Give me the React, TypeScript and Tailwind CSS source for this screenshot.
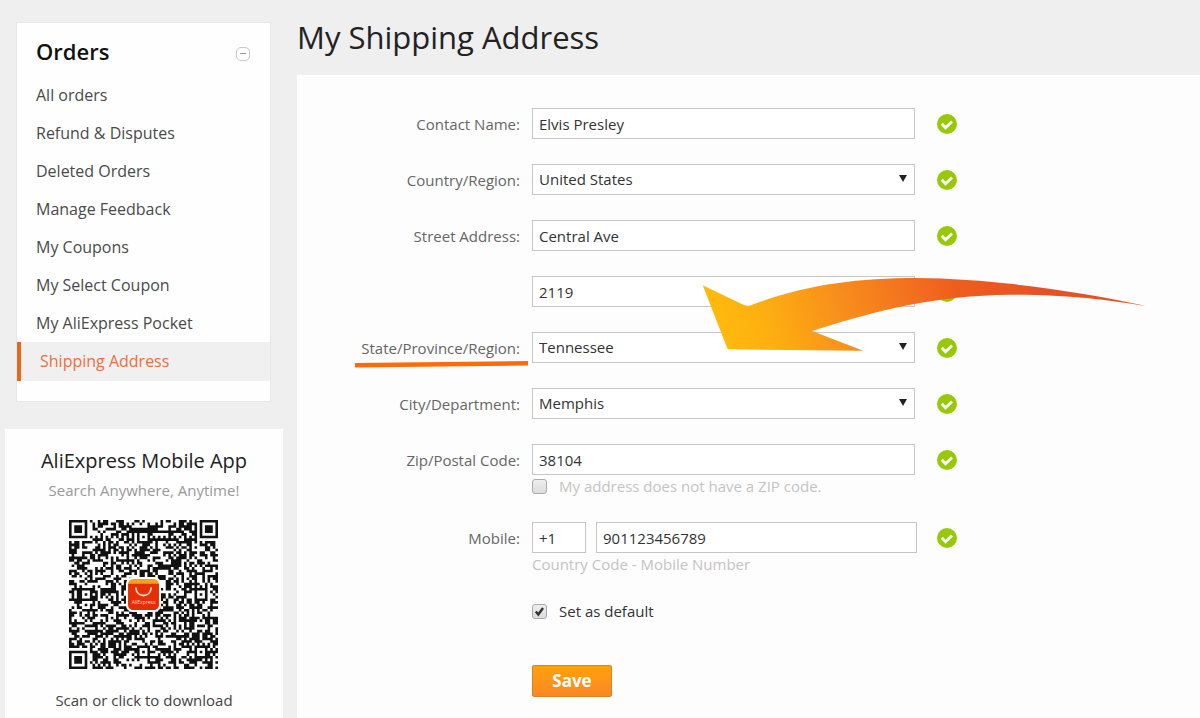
import { useId, useState } from "react";
import type { ReactNode } from "react";

const MENU = [
  "All orders",
  "Refund & Disputes",
  "Deleted Orders",
  "Manage Feedback",
  "My Coupons",
  "My Select Coupon",
  "My AliExpress Pocket",
  "Shipping Address",
];

const QR_SIZE = 57;

// finder pattern in a corner: returns undefined outside of it
const finder = (x: number, y: number, cx: number, cy: number) => {
  const d = Math.max(Math.abs(x - cx), Math.abs(y - cy));
  if (d > 4) return undefined;
  return d !== 2 && d !== 4;
};

const alignment = (x: number, y: number, cx: number, cy: number) => {
  const d = Math.max(Math.abs(x - cx), Math.abs(y - cy));
  if (d > 2) return undefined;
  return d !== 1;
};

const buildQr = () => {
  let seed = 20391;
  let path = "";
  for (let y = 0; y < QR_SIZE; y++) {
    for (let x = 0; x < QR_SIZE; x++) {
      seed = (seed * 1103515245 + 12345) % 2147483648;
      const dark =
        finder(x, y, 3, 3) ??
        finder(x, y, 53, 3) ??
        finder(x, y, 3, 53) ??
        alignment(x, y, 28, 6) ??
        alignment(x, y, 6, 28) ??
        alignment(x, y, 50, 28) ??
        alignment(x, y, 28, 50) ??
        alignment(x, y, 50, 50) ??
        (x === 6 || y === 6 ? (x + y) % 2 === 0 : seed / 2147483648 > 0.47);
      if (dark) path += `M${x} ${y}h1v1h-1z`;
    }
  }
  return path;
};

const QR_PATH = buildQr();

const QrCode = () => (
  <svg viewBox="0 0 57 57" className="size-[149px]" role="img" aria-label="QR code">
    <path d={QR_PATH} fill="#111" />
    <rect x="21.8" y="21.8" width="13.4" height="13.4" rx="2.6" fill="#fff" />
    <rect x="22.6" y="22.6" width="11.8" height="11.8" rx="2" fill="#f7a01b" />
    <path d="M22.6 24.4h11.8v8a2 2 0 0 1-2 2h-7.8a2 2 0 0 1-2-2z" fill="#e62e04" />
    <path d="M25.6 26.1c.4 3.7 5.4 3.7 5.8 0" fill="none" stroke="#ffd9cc" strokeWidth=".7" strokeLinecap="round" />
    <text x="28.5" y="32" textAnchor="middle" fontSize="1.9" fill="#ffd9cc" fontFamily="Open Sans, sans-serif">
      AliExpress
    </text>
  </svg>
);

const ValidIcon = () => (
  <svg viewBox="0 0 20 20" className="size-5 shrink-0" aria-hidden="true">
    <circle cx="10" cy="10" r="10" fill="#98c80a" />
    <path d="M4.8 9.8l3.7 4L15 7.5" fill="none" stroke="#fff" strokeWidth="2.8" />
  </svg>
);

const Arrow = () => (
  <svg
    viewBox="0 0 1410 330"
    className="pointer-events-none absolute -top-4 left-[158px] z-10 h-[110px] w-[470px] max-w-none"
    aria-hidden="true"
  >
    <defs>
      <linearGradient id="arrow" gradientUnits="userSpaceOnUse" x1="110" y1="250" x2="1000" y2="-40">
        <stop offset="0" stopColor="#ffb90d" />
        <stop offset=".15" stopColor="#fdae10" />
        <stop offset=".35" stopColor="#f8931b" />
        <stop offset=".6" stopColor="#f3721e" />
        <stop offset=".75" stopColor="#ef5d1e" />
        <stop offset="1" stopColor="#e55325" />
      </linearGradient>
    </defs>
    <path
      d="M38 76L160 134Q177 141 192 132C350 74 500 54 680 54C900 56 1150 90 1368 138C1250 118 1130 104 960 104C740 106 560 150 366 213L520 272L113 268Z"
      fill="url(#arrow)"
    />
  </svg>
);

const boxClass = "h-[31px] w-full min-w-0 border border-[#c6c6c6] bg-white px-[6px] text-[15px] text-[#333] outline-none";

interface RowProps {
  label?: string;
  htmlFor?: string;
  underline?: boolean;
  below?: ReactNode;
  children: ReactNode;
}

/** One form line: label on the left, control in the middle, valid mark on the right */
const Row = ({ label, htmlFor, underline, below, children }: RowProps) => (
  <div className="flex gap-3">
    <div className="w-[223px] shrink-0 pt-1 text-right text-[#666]">
      {label && (
        <label htmlFor={htmlFor} className="relative inline-block leading-6">
          {label}
          {underline && (
            <svg viewBox="0 0 173 7" className="absolute top-[25px] -right-2 h-[7px] w-[173px] max-w-none" aria-hidden="true">
              <path d="M0 2L173 0V4.500L0 6.500Z" fill="#ff6a0a" />
            </svg>
          )}
        </label>
      )}
    </div>
    <div className="relative min-w-0 max-w-[385px] flex-1">
      {children}
      {below}
    </div>
    <div className="flex h-[31px] items-center pl-2">
      <ValidIcon />
    </div>
  </div>
);

const TextRow = ({ label, value, name, below, arrow }: { label?: string; value: string; name: string; below?: ReactNode; arrow?: boolean }) => {
  const id = useId();
  return (
    <Row label={label} htmlFor={id} below={below}>
      <div className="pr-0.5">
        <input id={id} aria-label={label ? undefined : name} name={name} defaultValue={value} className={boxClass} />
      </div>
      {arrow && <Arrow />}
    </Row>
  );
};

const SelectRow = ({ label, value, underline }: { label: string; value: string; underline?: boolean }) => {
  const id = useId();
  return (
    <Row label={label} htmlFor={id} underline={underline}>
      <div className="relative pr-0.5">
        <select id={id} className={`${boxClass} appearance-none`}>
          <option>{value}</option>
        </select>
        <svg viewBox="0 0 8 7" className="pointer-events-none absolute top-[11px] right-2.5 h-[7px] w-2" aria-hidden="true">
          <path d="M0 0h8L4 7z" fill="#222" />
        </svg>
      </div>
    </Row>
  );
};

const Checkbox = ({ label, muted, checked }: { label: string; muted?: boolean; checked?: boolean }) => {
  const [on, setOn] = useState(!!checked);
  return (
    <label className={`flex h-[22px] items-center gap-3 leading-[22px] ${muted ? "text-[#c4c4c4]" : "text-[#333]"}`}>
      <span className="relative size-[15px]">
        <input
          type="checkbox"
          checked={on}
          onChange={(e) => setOn(e.target.checked)}
          className="block size-[15px] appearance-none rounded-[3px] border border-[#aaa] bg-linear-to-b from-[#eee] to-[#dcdcdc]"
        />
        {on && (
          <svg viewBox="0 0 15 15" className="pointer-events-none absolute inset-0" aria-hidden="true">
            <path d="M3.800 7.500L6.300 10.500L11 4" fill="none" stroke="#333" strokeWidth="2.400" />
          </svg>
        )}
      </span>
      {label}
    </label>
  );
};

const Sidebar = () => (
  <aside className="flex w-[283px] shrink-0 flex-col pl-[5px]">
    <nav className="mr-3 ml-[11px] mt-[22px] border border-[#e6e6e6] bg-[#fefefe] pb-5">
      <div className="flex h-[53px] items-center justify-between pt-1 pr-5 pl-[19px]">
        <h2 className="text-[22px] font-semibold text-[#111]">Orders</h2>
        <button type="button" aria-label="Collapse orders" className="mt-1 flex size-[14px] items-center justify-center rounded-[5px] border border-[#c8c8c8]">
          <span className="h-px w-1.5 bg-[#999]" />
        </button>
      </div>
      <ul className="text-base">
        {MENU.map((item) => (
          <li key={item}>
            {item === "Shipping Address" ? (
              <a href="#" aria-current="page" className="block border-l-4 border-[#e2691c] bg-[#f0f0f0] pl-[19px] leading-[39px] text-[#e8703f]">
                {item}
              </a>
            ) : (
              <a href="#" className="block pl-[19px] leading-[38px] text-[#4a4a4a]">{item}</a>
            )}
          </li>
        ))}
      </ul>
    </nav>

    <section className="mt-[27px] flex flex-1 flex-col items-center bg-[#fefefe] pt-4 text-[15px]">
      <h2 className="text-xl leading-8 text-[#222]">AliExpress Mobile App</h2>
      <p className="leading-[26px] text-[#999]">Search Anywhere, Anytime!</p>
      <a href="#" className="mt-[17px] flex flex-col items-center text-[#444]">
        <QrCode />
        <span className="mt-[19px] leading-6">Scan or click to download</span>
      </a>
    </section>
  </aside>
);

const App = () => (
  <div className="flex min-h-screen bg-[#efefef] font-['Open_Sans',sans-serif] text-[15px]">
    <Sidebar />
    <main className="ml-[14px] flex min-w-0 flex-1 flex-col">
      <h1 className="h-[75px] text-[31px] leading-[74px] text-[#222]">My Shipping Address</h1>
      <form className="flex flex-1 flex-col gap-[25px] bg-[#fdfdfd] pt-[33px]" onSubmit={(e) => e.preventDefault()}>
        <TextRow label="Contact Name:" name="contact" value="Elvis Presley" />
        <SelectRow label="Country/Region:" value="United States" />
        <TextRow label="Street Address:" name="street" value="Central Ave" />
        <TextRow name="Apartment" value="2119" arrow />
        <SelectRow label="State/Province/Region:" value="Tennessee" underline />
        <SelectRow label="City/Department:" value="Memphis" />
        <TextRow label="Zip/Postal Code:" name="zip" value="38104" below={<Checkbox label="My address does not have a ZIP code." muted />} />
        <Row label="Mobile:" htmlFor="mobile" below={<p className="leading-[22px] text-[#c4c4c4]">Country Code - Mobile Number</p>}>
          <div className="flex gap-2.5">
            <div className="w-[54px] shrink-0">
              <input aria-label="Country code" defaultValue="+1" className={boxClass} />
            </div>
            <input id="mobile" type="tel" defaultValue="901123456789" className={boxClass} />
          </div>
        </Row>
        <div className="pl-[235px]">
          <Checkbox label="Set as default" checked />
          <button
            type="submit"
            className="mt-[43px] h-8 w-20 rounded-xs border border-[#d98324] bg-linear-to-b from-[#ffa204] to-[#fb8724] text-[17px] leading-7 font-bold text-white"
          >
            Save
          </button>
        </div>
      </form>
    </main>
  </div>
);

export default App;
